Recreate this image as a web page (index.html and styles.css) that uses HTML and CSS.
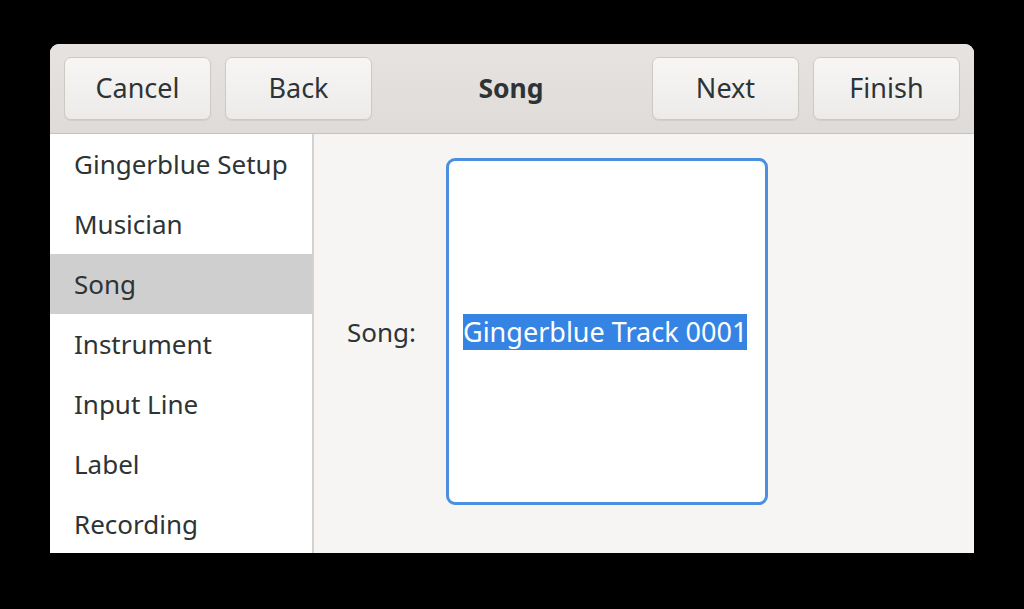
FILE: index.html
```html
<!DOCTYPE html>
<html>
<head>
<meta charset="utf-8">
<link rel="stylesheet" href="styles.css">
</head>
<body>
<div class="window">
  <header class="headerbar">
    <div class="group">
      <button class="btn">Cancel</button>
      <button class="btn">Back</button>
    </div>
    <div class="title">Song</div>
    <div class="group">
      <button class="btn">Next</button>
      <button class="btn">Finish</button>
    </div>
  </header>
  <div class="body">
    <nav class="sidebar">
      <div class="item">Gingerblue Setup</div>
      <div class="item">Musician</div>
      <div class="item selected">Song</div>
      <div class="item">Instrument</div>
      <div class="item">Input Line</div>
      <div class="item">Label</div>
      <div class="item">Recording</div>
    </nav>
    <main class="content">
      <div class="label">Song:</div>
      <div class="entry"><span class="sel">Gingerblue Track 0001</span></div>
    </main>
  </div>
</div>
</body>
</html>
```
FILE: styles.css
```css
html, body {
  margin: 0;
  padding: 0;
  background: #000;
  width: 1024px;
  height: 609px;
  overflow: hidden;
  font-family: "Noto Sans", "Open Sans", sans-serif;
}
.window {
  margin: 44px 0 0 50px;
  width: 924px;
  height: 509px;
  border-radius: 9px 9px 0 0;
  overflow: hidden;
  background: #f6f5f4;
  display: flex;
  flex-direction: column;
}
.headerbar {
  height: 89px;
  flex: none;
  background: linear-gradient(#e6e3e0, #dfdbd8);
  border-bottom: 1px solid #c7c2bd;
  display: flex;
  align-items: center;
  justify-content: space-between;
  padding: 0 14px;
  box-sizing: content-box;
}
.group {
  display: flex;
  gap: 14px;
}
.btn {
  width: 147px;
  height: 63px;
  border: 1px solid #cfc9c4;
  border-radius: 7px;
  background: linear-gradient(#f7f6f5, #edebe9);
  box-shadow: 0 1px 1px rgba(0,0,0,0.07);
  font-family: "Noto Sans", "Open Sans", sans-serif;
  font-size: 27px;
  color: #2e3436;
  padding: 0 0 2px 0;
}
.title {
  font-weight: bold;
  font-size: 26.5px;
  color: #2e3436;
  margin-right: 2px;
  padding-bottom: 2px;
}
.body {
  flex: 1;
  display: flex;
}
.sidebar {
  width: 262px;
  background: #fff;
  border-right: 2px solid #d5d1cd;
}
.item {
  height: 60px;
  display: flex;
  align-items: center;
  padding-left: 24px;
  font-size: 26px;
  color: #2e3436;
}
.item.selected {
  background: #cfcfcf;
}
.content {
  flex: 1;
  display: flex;
  align-items: center;
  padding-left: 33px;
  padding-bottom: 25px;
  box-sizing: border-box;
}
.label {
  font-size: 26px;
  color: #2e3436;
  width: 99px;
  flex: none;
}
.entry {
  width: 302px;
  height: 341px;
  flex: none;
  border: 3px solid #4a8fe0;
  border-radius: 9px;
  background: #fff;
  display: flex;
  align-items: center;
  padding-left: 14px;
  box-sizing: content-box;
}
.sel {
  background: #3584e4;
  color: #fff;
  font-size: 27px;
  line-height: 36px;
  display: inline-block;
  white-space: nowrap;
}
```
